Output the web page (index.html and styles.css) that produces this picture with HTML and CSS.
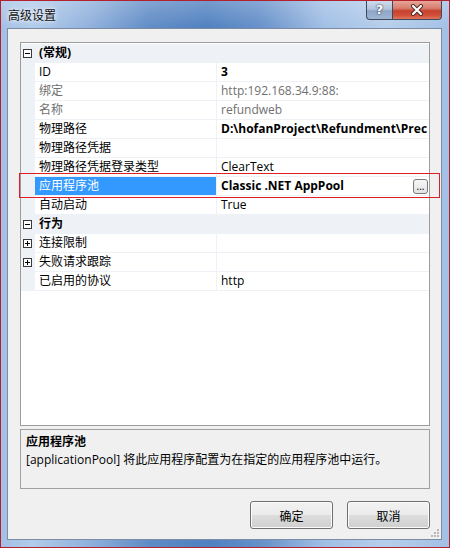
FILE: index.html
```html
<!DOCTYPE html>
<html lang="zh-CN">
<head>
<meta charset="utf-8">
<title>高级设置</title>
<link rel="stylesheet" href="styles.css">
</head>
<body>
<div class="window">
  <div class="titlebar">
    <span class="title">高级设置</span>
    <div class="caption-btns">
      <div class="cbtn help">?</div>
      <div class="cbtn close">
        <svg width="14" height="12" viewBox="0 0 14 12">
          <path d="M3 2 L11 10 M11 2 L3 10" stroke="#4a2a26" stroke-width="4" stroke-linecap="round"/>
          <path d="M3 2 L11 10 M11 2 L3 10" stroke="#ffffff" stroke-width="2.2" stroke-linecap="round"/>
        </svg>
      </div>
    </div>
  </div>
  <div class="client">
    <div class="grid">
      <div class="row cat">
        <span class="gutter"><svg width="9" height="9" viewBox="0 0 9 9"><rect x="0.5" y="0.5" width="8" height="8" fill="#fff" stroke="#3a3a3a"/><path d="M2 4.5 H7" stroke="#000"/></svg></span>
        <span class="cat-name">(常规)</span>
      </div>
      <div class="row"><span class="gutter"></span><span class="name">ID</span><span class="value b">3</span></div>
      <div class="row ro"><span class="gutter"></span><span class="name">绑定</span><span class="value">http:192.168.34.9:88:</span></div>
      <div class="row ro"><span class="gutter"></span><span class="name">名称</span><span class="value">refundweb</span></div>
      <div class="row"><span class="gutter"></span><span class="name">物理路径</span><span class="value b">D:\hofanProject\Refundment\Prec</span></div>
      <div class="row"><span class="gutter"></span><span class="name">物理路径凭据</span><span class="value"></span></div>
      <div class="row"><span class="gutter"></span><span class="name">物理路径凭据登录类型</span><span class="value">ClearText</span></div>
      <div class="row sel"><span class="gutter"></span><span class="name">应用程序池</span><span class="value b">Classic .NET AppPool<span class="ellipsis">...</span></span></div>
      <div class="row"><span class="gutter"></span><span class="name">自动启动</span><span class="value">True</span></div>
      <div class="row cat">
        <span class="gutter"><svg width="9" height="9" viewBox="0 0 9 9"><rect x="0.5" y="0.5" width="8" height="8" fill="#fff" stroke="#3a3a3a"/><path d="M2 4.5 H7" stroke="#000"/></svg></span>
        <span class="cat-name">行为</span>
      </div>
      <div class="row"><span class="gutter"><svg width="9" height="9" viewBox="0 0 9 9"><rect x="0.5" y="0.5" width="8" height="8" fill="#fff" stroke="#3a3a3a"/><path d="M2 4.5 H7 M4.5 2 V7" stroke="#000"/></svg></span><span class="name">连接限制</span><span class="value"></span></div>
      <div class="row"><span class="gutter"><svg width="9" height="9" viewBox="0 0 9 9"><rect x="0.5" y="0.5" width="8" height="8" fill="#fff" stroke="#3a3a3a"/><path d="M2 4.5 H7 M4.5 2 V7" stroke="#000"/></svg></span><span class="name">失败请求跟踪</span><span class="value"></span></div>
      <div class="row"><span class="gutter"></span><span class="name">已启用的协议</span><span class="value">http</span></div>
    </div>
    <div class="desc">
      <div class="desc-title">应用程序池</div>
      <div class="desc-text">[applicationPool] 将此应用程序配置为在指定的应用程序池中运行。</div>
    </div>
    <div class="actions">
      <button class="btn">确定</button>
      <button class="btn">取消</button>
    </div>
    <div class="highlight"></div>
    <svg class="grip" width="8" height="8" viewBox="0 0 8 8">
      <g fill="#b8b8b8">
        <rect x="6" y="0" width="2" height="2"/>
        <rect x="3" y="3" width="2" height="2"/><rect x="6" y="3" width="2" height="2"/>
        <rect x="0" y="6" width="2" height="2"/><rect x="3" y="6" width="2" height="2"/><rect x="6" y="6" width="2" height="2"/>
      </g>
    </svg>
  </div>
</div>
</body>
</html>
```

FILE: styles.css
```css
* { box-sizing: border-box; }

body {
  margin: 0;
  background: #ffffff;
  font-family: "Open Sans", "Noto Sans CJK SC", sans-serif;
  font-size: 12px;
  color: #000;
}

.window {
  width: 450px;
  height: 548px;
  border: 1px solid #b3222c;
  padding: 0 7px 7px 6px;
  display: flex;
  flex-direction: column;
  background:
    linear-gradient(180deg, rgba(255,255,255,0.22) 0, rgba(255,255,255,0) 28px),
    linear-gradient(90deg, #a3bfe4 0%, #b1cbea 7%, #8fb0dc 20%, #5f8bc5 33%, #4f80c0 46%, #6690c9 58%, #a0bee5 72%, #b6ceeb 86%, #a2bfe5 100%);
}

.titlebar {
  height: 27px;
  display: flex;
  align-items: center;
  padding-left: 1px;
}

.title {
  font-family: "Noto Sans CJK SC", sans-serif;
  font-size: 12px;
  line-height: 16px;
  color: #111;
  text-shadow: 0 0 6px rgba(255,255,255,0.9), 0 0 3px rgba(255,255,255,0.8);
}

.caption-btns {
  margin-left: auto;
  align-self: flex-start;
  display: flex;
  height: 19px;
}

.cbtn {
  height: 19px;
  border: 1px solid #3d4a5e;
  border-top: none;
  display: flex;
  align-items: center;
  justify-content: center;
}

.help {
  width: 26px;
  border-right: none;
  border-radius: 0 0 0 4px;
  background: linear-gradient(180deg, #cfdbea 0%, #b3c4dc 45%, #8ea5c6 55%, #9fb5d3 100%);
  color: #fff;
  font-family: "DejaVu Sans", sans-serif;
  font-weight: bold;
  font-size: 13px;
  line-height: 18px;
  text-shadow: 0 0 2px #2b3a52, 0 0 1px #2b3a52;
}

.close {
  width: 50px;
  border-radius: 0 0 4px 0;
  background: linear-gradient(180deg, #e7a597 0%, #d87e6e 40%, #c7402e 55%, #d2503a 80%, #e0775d 100%);
}

.client {
  height: 512px;
  border: 1px solid #7c8ca3;
  background: #f0f0f0;
  padding: 13px 11px 0 12px;
  position: relative;
  display: flex;
  flex-direction: column;
}

.grid {
  height: 384px;
  border: 1px solid #9c9c9c;
  background: #fff;
  padding-top: 1px;
}

.row {
  display: flex;
  height: 19px;
}

.gutter {
  width: 14px;
  flex: none;
  background: #eef1f6;
  display: flex;
  align-items: center;
  padding-left: 2px;
}

.gutter svg { display: block; }

.name {
  width: 181px;
  flex: none;
  padding-left: 4px;
  line-height: 18px;
  border-bottom: 1px solid #eef1f6;
  white-space: nowrap;
  overflow: hidden;
}

.value {
  flex: 1;
  min-width: 0;
  display: flex;
  align-items: center;
  padding-left: 4px;
  line-height: 18px;
  height: 19px;
  border-left: 1px solid #eef1f6;
  border-bottom: 1px solid #eef1f6;
  white-space: nowrap;
  overflow: hidden;
}

.b { font-weight: bold; }

.ro .name, .ro .value { color: #707070; }

.cat { background: #eef1f6; }

.cat-name {
  padding-left: 4px;
  line-height: 18px;
  font-weight: bold;
}

.sel .name {
  background: #3399ff;
  color: #fff;
}

.ellipsis {
  margin-left: auto;
  margin-right: 1px;
  width: 15px;
  height: 15px;
  border: 1px solid #7a7a7a;
  border-radius: 3px;
  background: linear-gradient(180deg, #f7f7f7, #e2e2e2);
  font-weight: normal;
  font-size: 10px;
  line-height: 12px;
  text-align: center;
  color: #000;
  flex: none;
}

.desc {
  margin-top: 3px;
  height: 60px;
  border: 1px solid #a0a0a0;
  padding: 3px 5px;
  line-height: 18px;
}

.desc-title { font-weight: bold; }

.actions {
  margin-top: 12px;
  display: flex;
  justify-content: flex-end;
  gap: 14px;
}

.btn {
  width: 83px;
  height: 28px;
  border: 1px solid #707070;
  border-radius: 3px;
  background: linear-gradient(180deg, #f2f2f2 0%, #ebebeb 48%, #dddddd 52%, #cfcfcf 100%);
  box-shadow: inset 0 0 0 1px #fbfbfb;
  font-family: "Noto Sans CJK SC", sans-serif;
  font-size: 12px;
  color: #000;
  padding: 0;
}

.highlight {
  position: absolute;
  left: 11px;
  top: 144px;
  width: 421px;
  height: 25px;
  border: 1px solid #e01e28;
  pointer-events: none;
}

.grip {
  position: absolute;
  right: 2px;
  bottom: 2px;
}
```
